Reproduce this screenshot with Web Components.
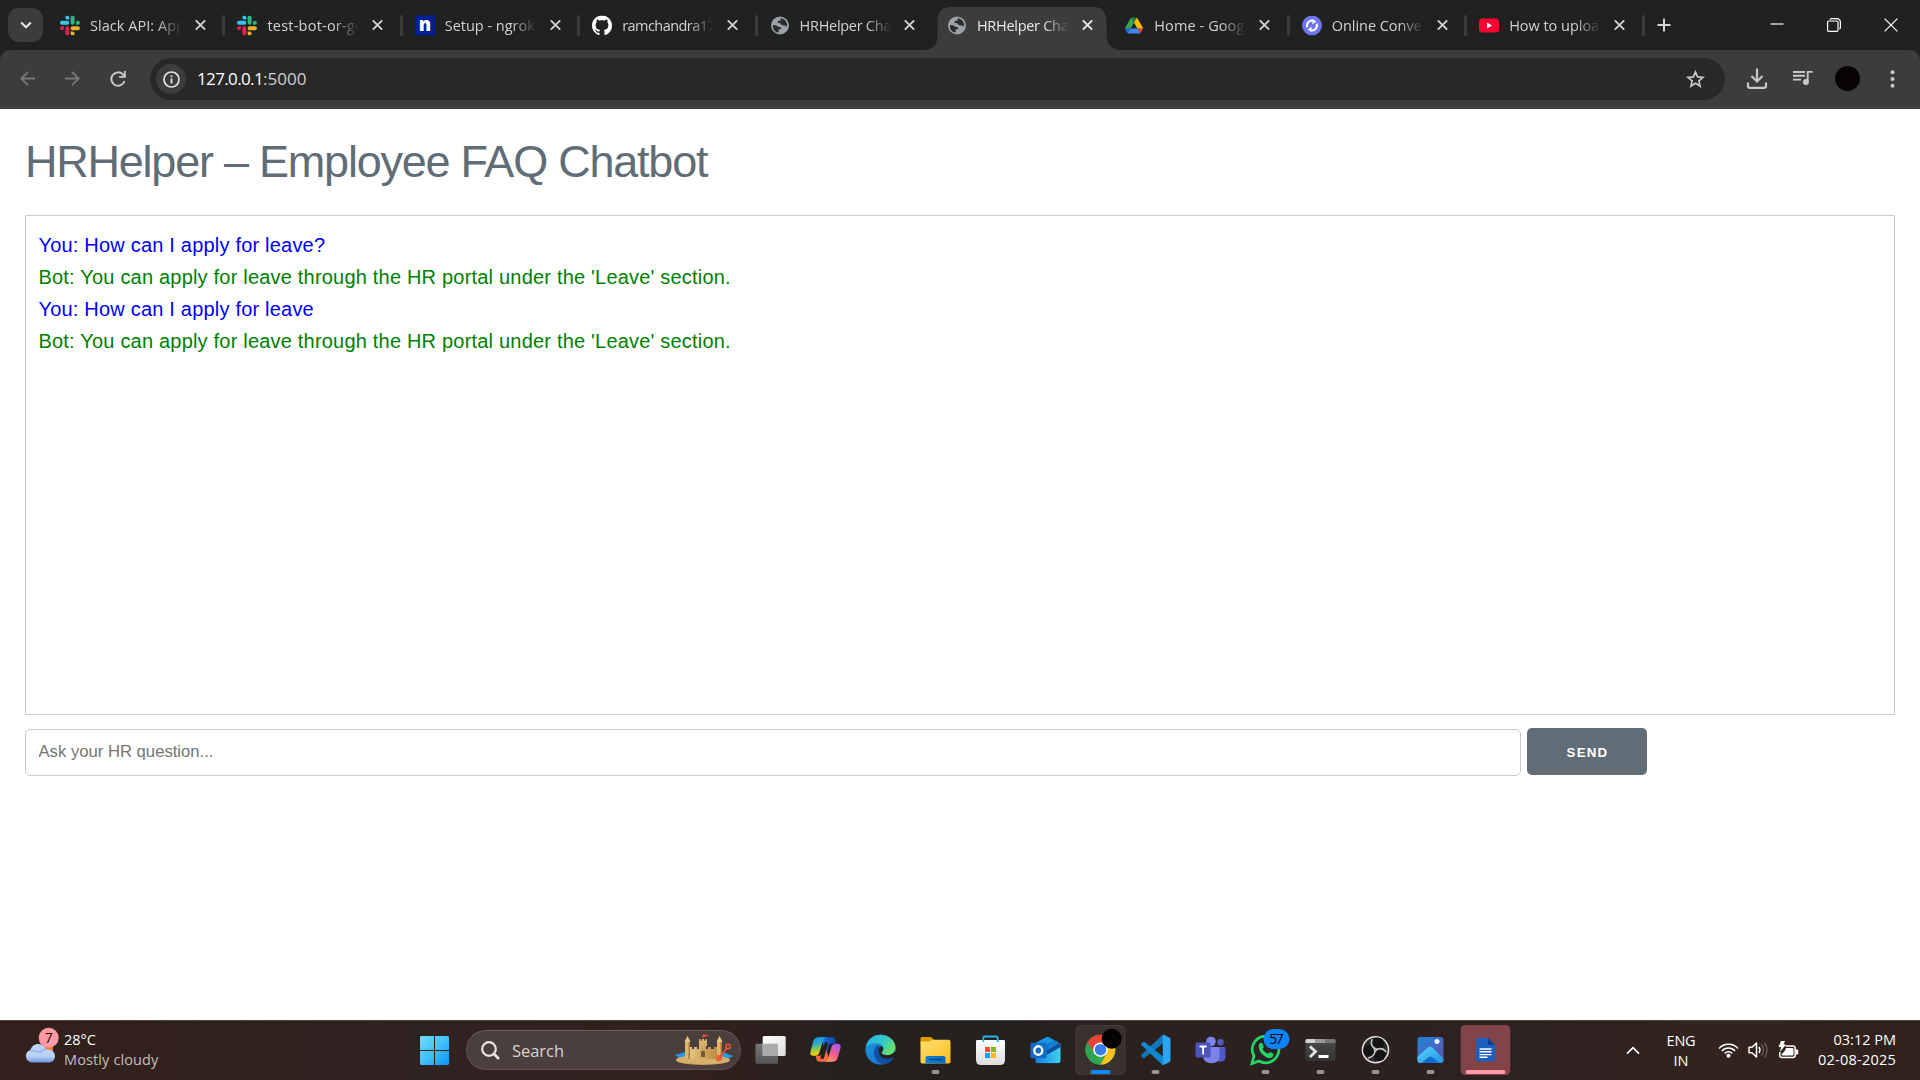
<!DOCTYPE html>
<html lang="en">
<head>
<meta charset="utf-8">
<title>HRHelper Chatbot</title>
<style>
html,body{margin:0;height:100%;overflow:hidden;background:#fff}
</style>
</head>
<body>
<desktop-screen></desktop-screen>
<script>
const define = (name, html, init) => customElements.define(name, class extends HTMLElement {
  constructor(){ super(); this.attachShadow({mode:'open'}); }
  connectedCallback(){
    this.shadowRoot.innerHTML = typeof html === 'function' ? html(this) : html;
    if (init) init(this);
  }
});

/* Single line of text whose tracking is adjusted to a given width (attribute w). */
define('fit-text', `<style>:host{display:block;white-space:nowrap}span{display:inline-block}</style><span><slot></slot></span>`, el => {
  const w = +el.getAttribute('w'), n = el.textContent.length;
  if (!w) return;
  const s = el.shadowRoot.querySelector('span');
  s.style.letterSpacing = ((w - s.getBoundingClientRect().width) / n).toFixed(3) + 'px';
});

const globe = `<svg width="20" height="20" viewBox="0 0 20 20"><circle cx="10" cy="10" r="9" fill="#9aa0a6"/><path d="M3 9.500Q6.500 9.300 8 11q1.200 1 3.200.8l-.3 1.800-2 .2-.4 3.200C4.800 16.500 2.500 13.500 3 9.500zM10.800 2.800l-.3 2.100-2.600.5-.2 2.200 2.700.2 1 1.700 3.300.4 2.400 1.100c.6-4-2.300-7.800-6.300-8.200z" fill="#2b2d2d"/></svg>`;
const slack = `<svg width="20" height="20" viewBox="0 0 54 54"><path fill="#36c5f0" d="M19.712.133a5.381 5.381 0 0 0-5.376 5.387 5.381 5.381 0 0 0 5.376 5.386h5.376V5.52A5.381 5.381 0 0 0 19.712.133m0 14.365H5.376A5.381 5.381 0 0 0 0 19.884a5.381 5.381 0 0 0 5.376 5.387h14.336a5.381 5.381 0 0 0 5.376-5.387 5.381 5.381 0 0 0-5.376-5.386"/><path fill="#2eb67d" d="M53.76 19.884a5.381 5.381 0 0 0-5.376-5.386 5.381 5.381 0 0 0-5.376 5.386v5.387h5.376a5.381 5.381 0 0 0 5.376-5.387m-14.336 0V5.52A5.381 5.381 0 0 0 34.048.133a5.381 5.381 0 0 0-5.376 5.387v14.364a5.381 5.381 0 0 0 5.376 5.387 5.381 5.381 0 0 0 5.376-5.387"/><path fill="#ecb22e" d="M34.048 54a5.381 5.381 0 0 0 5.376-5.387 5.381 5.381 0 0 0-5.376-5.386h-5.376v5.386A5.381 5.381 0 0 0 34.048 54m0-14.365h14.336a5.381 5.381 0 0 0 5.376-5.386 5.381 5.381 0 0 0-5.376-5.387H34.048a5.381 5.381 0 0 0-5.376 5.387 5.381 5.381 0 0 0 5.376 5.386"/><path fill="#e01e5a" d="M0 34.249a5.381 5.381 0 0 0 5.376 5.386 5.381 5.381 0 0 0 5.376-5.386v-5.387H5.376A5.381 5.381 0 0 0 0 34.25m14.336-.001v14.364A5.381 5.381 0 0 0 19.712 54a5.381 5.381 0 0 0 5.376-5.387V34.25a5.381 5.381 0 0 0-5.376-5.387 5.381 5.381 0 0 0-5.376 5.387"/></svg>`;
const favicons = {
  slack, globe,
  ngrok: `<svg width="20" height="20" viewBox="0 0 20 20" style="overflow:visible"><path fill="#011f97" d="M0 0h20v20H0z"/><text x="10" y="15.200" text-anchor="middle" font-family="Open Sans" font-weight="800" font-size="18.500" fill="#fff">n</text></svg>`,
  github: `<svg width="20" height="20" viewBox="0 0 16 16"><path fill="#fff" d="M8 0C3.58 0 0 3.58 0 8c0 3.54 2.29 6.53 5.47 7.59.4.07.55-.17.55-.38 0-.19-.01-.82-.01-1.49-2.01.37-2.53-.49-2.69-.94-.09-.23-.48-.94-.82-1.13-.28-.15-.68-.52-.01-.53.63-.01 1.08.58 1.23.82.72 1.21 1.87.87 2.33.66.07-.52.28-.87.51-1.07-1.78-.2-3.64-.89-3.64-3.95 0-.87.31-1.59.82-2.15-.08-.2-.36-1.02.08-2.12 0 0 .67-.21 2.2.82.64-.18 1.32-.27 2-.27s1.36.09 2 .27c1.53-1.04 2.2-.82 2.2-.82.44 1.1.16 1.92.08 2.12.51.56.82 1.27.82 2.15 0 3.07-1.87 3.75-3.65 3.95.29.25.54.73.54 1.48 0 1.07-.01 1.93-.01 2.2 0 .21.15.46.55.38A8.01 8.01 0 0 0 16 8c0-4.42-3.58-8-8-8z"/></svg>`,
  drive: `<svg width="20" height="20" viewBox="-5 -9.500 97 97"><path fill="#1a73e8" d="m6.600 66.850 3.850 6.650c.8 1.400 1.950 2.500 3.300 3.300l13.750-23.800h-27.500c0 1.550.4 3.100 1.200 4.500z"/><path fill="#34a853" d="m43.650 25-13.750-23.800c-1.350.8-2.500 1.900-3.300 3.300l-25.400 44a9.060 9.060 0 0 0-1.200 4.500h27.500z"/><path fill="#ea4335" d="m73.550 76.800c1.350-.8 2.500-1.900 3.300-3.300l1.600-2.750 7.650-13.250c.8-1.400 1.200-2.950 1.200-4.500h-27.500l5.850 11.500z"/><path fill="#188038" d="m43.650 25 13.750-23.800c-1.350-.8-2.900-1.200-4.500-1.200h-18.500c-1.600 0-3.150.45-4.500 1.200z"/><path fill="#4285f4" d="m59.800 53h-32.300l-13.750 23.800c1.350.8 2.900 1.200 4.500 1.200h50.800c1.600 0 3.150-.45 4.500-1.200z"/><path fill="#fbbc04" d="m73.400 26.500-12.700-22c-.8-1.400-1.950-2.500-3.300-3.300l-13.750 23.800 16.150 28h27.450c0-1.550-.4-3.100-1.200-4.500z"/></svg>`,
  convert: `<svg width="20" height="20" viewBox="0 0 20 20"><circle cx="10" cy="10" r="10" fill="#6f74f3"/><g fill="none" stroke="#fff" stroke-width="2"><path d="M5.300 11.800A5 5 0 0 1 11.500 5.300"/><path d="M14.700 8.200A5 5 0 0 1 8.500 14.700"/></g><path fill="#fff" d="M10.300 3.400 14.300 6l-3.800 2.700zM9.700 16.600 5.700 14l3.800-2.700z"/></svg>`,
  youtube: `<svg width="20" height="20" viewBox="0 0 20 20"><rect y="3" width="20" height="14" rx="3.500" fill="#ff0033"/><path fill="#fff" d="m8 7 5 3-5 3z"/></svg>`
};

define('browser-tab', el => `<style>
:host{display:flex;position:relative;width:177.400px;height:43px;margin-top:7px;align-items:center;box-sizing:border-box;padding-left:12px;color:#d0d2d1;font:14.500px/20px "Open Sans",sans-serif;flex:none}
.ico{display:flex;width:20px}
.t{width:90px;margin-left:10px;overflow:hidden;-webkit-mask:linear-gradient(90deg,#000 66px,transparent 92px);mask:linear-gradient(90deg,#000 66px,transparent 92px);padding-top:1px}
.x{margin-left:14.800px;display:block}
.sep{position:absolute;right:0;top:10.500px;width:3px;height:21px;background:#3b3d3c;border-radius:2px}
:host([nosep]) .sep{display:none}
:host>*{translate:0 -3.500px}
.ico,.t,.x,.sep{translate:0 -3.500px}
.sep{translate:0 -3px}
.bg{position:absolute;left:-10px;top:0;translate:0 0;display:none}
:host([active]){color:#e9e9e9}
:host([active]) .bg{display:block}
:host([active]) .ico,:host([active]) .t,:host([active]) .x{position:relative}
</style>
<svg class="bg" width="196" height="43" viewBox="0 0 196 43"><path fill="#3c3c3c" d="M0 43c7 0 12.500-6 12.500-13V13c0-7 5-13 12.500-13h144c7.500 0 12.500 6 12.500 13v17c0 7 6 13 14.500 13z"/></svg>
<span class="ico">${favicons[el.getAttribute('icon')]}</span>
<div class="t"><fit-text w="${el.getAttribute('w')}">${el.getAttribute('label')}</fit-text></div>
<svg class="x" width="11" height="11" viewBox="0 0 11 11"><path d="m.8.8 9.400 9.400M10.200.8.800 10.200" stroke="currentColor" stroke-width="1.900"/></svg>
<i class="sep"></i>`);

define('tab-strip', `<style>
:host{display:flex;height:50px;background:#202221;align-items:flex-start;overflow:hidden}
.search{display:flex;width:35px;height:34px;margin:8px 5px 0 8px;border-radius:11px;background:#3c3c3c;align-items:center;justify-content:center;flex:none}
.new{margin:18px 0 0 12.500px}
.win{margin:0 22px 0 auto;height:49px;display:flex;align-items:center;gap:43px}
.win svg{display:block}
</style>
<div class="search"><svg width="12" height="8" viewBox="0 0 12 8"><path d="m1.200 1.500 4.800 4.800 4.800-4.800" fill="none" stroke="#e3e3e3" stroke-width="2.200"/></svg></div>
<browser-tab icon="slack" label="Slack API: App" w="95"></browser-tab>
<browser-tab icon="slack" label="test-bot-or-ge" w="96"></browser-tab>
<browser-tab icon="ngrok" label="Setup - ngrok" w="90"></browser-tab>
<browser-tab icon="github" label="ramchandra17" w="93"></browser-tab>
<browser-tab icon="globe" label="HRHelper Cha" w="91.500" nosep></browser-tab>
<browser-tab icon="globe" label="HRHelper Cha" w="91.500" nosep active></browser-tab>
<browser-tab icon="drive" label="Home - Goog" w="90"></browser-tab>
<browser-tab icon="convert" label="Online Conve" w="90"></browser-tab>
<browser-tab icon="youtube" label="How to uploa" w="90"></browser-tab>
<svg class="new" width="14" height="14" viewBox="0 0 14 14"><path d="M7 .5v13M.5 7h13" stroke="#d4d4d4" stroke-width="2"/></svg>
<div class="win">
<svg width="14" height="14" viewBox="0 0 14 14"><path d="M.5 6h13" stroke="#fff" stroke-width="1.200"/></svg>
<svg width="14" height="14" viewBox="0 0 14 14"><rect x=".6" y="3" width="10.400" height="10.400" rx="1.200" fill="none" stroke="#fff" stroke-width="1.200"/><path d="M3 1.600Q3.400.6 4.500.6h5.500a3.400 3.400 0 0 1 3.400 3.400v5.500q0 1-1 1.600" fill="none" stroke="#fff" stroke-width="1.200"/></svg>
<svg width="14" height="14" viewBox="0 0 14 14"><path d="m.6.6 12.800 12.800M13.400.6.600 13.400" stroke="#fff" stroke-width="1.200"/></svg>
</div>`);

define('tool-bar', `<style>
:host{display:flex;height:59px;background:#202221;font:17px/24px "Open Sans",sans-serif}
.bar{flex:1;display:flex;align-items:center;background:#3c3c3c;border-radius:10px 10px 0 0;padding-bottom:1px;box-shadow:inset 0 -1px #3c3c3c,inset 0 -2px #4b4747;box-sizing:border-box}
svg{display:block;flex:none}
.nav{display:flex;margin-left:20px;gap:29.500px;width:130px;align-items:center}
.nav svg{margin-top:-1px}
.omni{display:flex;align-items:center;width:1575px;height:42px;border-radius:21px;background:#282828;box-sizing:border-box;padding:0 20px 0 6px;color:#d0d0d0}
.info{width:30px;height:30px;border-radius:50%;background:#3c3c3c;display:flex;align-items:center;justify-content:center;margin-right:11px}
.url{display:flex}
b{font-weight:400;color:#fff}
.star{margin-left:auto}
.av{width:25px;height:25px;border-radius:50%;background:#070305;margin:-1px 0 0 22px;flex:none}
</style>
<div class="bar">
<div class="nav">
<svg width="15" height="15" viewBox="0 0 15 15"><path d="M15 7.500H1.500M8 .8 1.300 7.500 8 14.200" stroke="#777" stroke-width="1.800" fill="none"/></svg>
<svg width="15" height="15" viewBox="0 0 15 15"><path d="M0 7.500h13.500M7 .8l6.700 6.700L7 14.200" stroke="#777" stroke-width="1.800" fill="none"/></svg>
<svg width="16" height="16" viewBox="0 0 16 16" style="margin-left:.5px"><path d="M14.500 10A6.700 6.700 0 1 1 12.800 3.300L14.700 5.300" fill="none" stroke="#c7c7c7" stroke-width="2"/><path d="M15.800 0v6.800H9V5h5V0z" fill="#c7c7c7"/></svg>
</div>
<div class="omni">
<span class="info"><svg width="17" height="17" viewBox="0 0 17 17"><circle cx="8.500" cy="8.500" r="7.500" fill="none" stroke="#e3e3e3" stroke-width="1.700"/><path d="M7.600 7.500h1.800v5H7.600zM7.600 4.400h1.800v1.800H7.600z" fill="#e3e3e3"/></svg></span>
<span class="url"><fit-text w="66"><b>127.0.0.1</b></fit-text><fit-text w="43.500">:5000</fit-text></span>
<svg class="star" width="19" height="18" viewBox="0 0 19 18"><path d="m9.500 2 2.100 4.900 5.300.5-4 3.500 1.200 5.200-4.600-2.800-4.600 2.800 1.200-5.200-4-3.500 5.300-.5z" fill="none" stroke="#c7c7c7" stroke-width="1.700"/></svg>
</div>
<svg width="22" height="22" viewBox="0 0 22 22" style="margin-left:21px"><path d="M11 .5v12M5.500 8l5.500 5.500L16.500 8M2 14.500v3.600q0 1.700 1.700 1.700h14.600q1.700 0 1.700-1.700v-3.600" fill="none" stroke="#c7c7c7" stroke-width="2.200"/></svg>
<svg width="20" height="16" viewBox="0 0 20 16" style="margin:-2px 0 0 25px"><path d="M0 2h12M0 5.800h12M0 9.600h8M14.700 11V1.900h5" fill="none" stroke="#c7c7c7" stroke-width="1.900"/><circle cx="12.900" cy="12" r="3" fill="#c7c7c7"/></svg>
<span class="av"></span>
<svg width="5" height="18" viewBox="0 0 5 18" style="margin-left:29.500px"><g fill="#c7c7c7"><circle cx="2.500" cy="2.200" r="2"/><circle cx="2.500" cy="9" r="2"/><circle cx="2.500" cy="15.800" r="2"/></g></svg>
</div>`);

define('chat-line', `<style>:host{display:block;color:blue}:host([from=bot]){color:green}</style><slot></slot>`);

define('hr-chatbot', `<style>
:host{display:block;flex:1;padding:25px 25px 0;background:#fff;color:#606c76;font:300 20px/32px "Liberation Sans",Arial,sans-serif;letter-spacing:.2px}
h2{font-size:45px;line-height:56px;font-weight:300;letter-spacing:-1.230px;margin:0 0 25px}
.box{height:500px;box-sizing:border-box;border:1px solid #ccc;padding:12.500px}
.row{display:flex;margin-top:13px;align-items:flex-start;gap:6px}
input{width:1496px;height:47px;margin:1px 0 0;box-sizing:border-box;border:1px solid #ccc;border-radius:5px;padding:0 12.500px 2px;font:16.670px "Liberation Sans",Arial,sans-serif;background:#fff;outline:0}
input::placeholder{color:#757575}
button{width:120px;height:47px;border:0;border-radius:5px;background:#606c76;color:#fff;font:700 13.300px/47px "Liberation Sans",Arial,sans-serif;letter-spacing:1.250px;padding:1px 0 0 1px;text-transform:uppercase}
</style>
<h2>HRHelper – Employee FAQ Chatbot</h2>
<div class="box">
<chat-line>You: How can I apply for leave?</chat-line>
<chat-line from="bot">Bot: You can apply for leave through the HR portal under the 'Leave' section.</chat-line>
<chat-line>You: How can I apply for leave</chat-line>
<chat-line from="bot">Bot: You can apply for leave through the HR portal under the 'Leave' section.</chat-line>
</div>
<div class="row"><input placeholder="Ask your HR question..."><button>SEND</button></div>`);

/* Taskbar glyphs, each drawn in a 55x60 cell centred on (27.5, 29.7). */
const apps = {
view:`<defs><linearGradient id="a" x2="1" y2="1"><stop stop-color="#fff"/><stop offset="1" stop-color="#ddd"/></linearGradient><linearGradient id="b" x2="0" y2="1"><stop stop-color="#777"/><stop offset="1" stop-color="#555"/></linearGradient></defs><rect x="12.500" y="23.700" width="22.500" height="20" rx="1.500" fill="url(#b)"/><rect x="19.700" y="16" width="23" height="20" rx="1.500" fill="url(#a)"/><path d="M19.700 23.700H35V36H21q-1.300 0-1.300-1.300z" fill="#aaa"/>`,
copilot:`<defs><linearGradient id="a" x2=".2" y2="1"><stop stop-color="#1b9be8"/><stop offset=".35" stop-color="#20a6d8"/><stop offset=".65" stop-color="#7cc65a"/><stop offset="1" stop-color="#ffd200"/></linearGradient><linearGradient id="b" x1=".8" x2=".2" y2="1"><stop stop-color="#a855f0"/><stop offset=".5" stop-color="#ef5a9a"/><stop offset="1" stop-color="#ff9a4a"/></linearGradient><linearGradient id="c" x2="1"><stop stop-color="#1580e0"/><stop offset="1" stop-color="#1442b5"/></linearGradient></defs><path d="M21 17.300h13q2.700 0 3.300 3l.7 3.200h-4q-2.500 0-3.500 3L28 34 24 20z" fill="url(#c)"/><path d="M34 41.700H21.500q-2.700 0-3.200-3l-.8-3H21q2.500 0 3.500-3L27 25l4 14z" fill="#f26a45"/><path d="M21 17.300h8q-3 0-4.200 4l-3.500 11.500q-1 2.900-4 2.900h-2q-3.800 0-2.800-4.200l2.700-10q1.200-4.200 5.800-4.200z" fill="url(#a)"/><path d="M34 41.700h-7.800q3-.2 4-3.700l3.500-11.400q1-2.900 4-2.900h2q3.800 0 2.800 4.200l-2.700 9.600q-1.200 4.200-5.800 4.200z" fill="url(#b)"/><path d="m28.300 23.700-4 13.500" stroke="#25211f" stroke-width="3.500" stroke-linecap="round"/>`,
edge:`<defs><linearGradient id="a" y2=".5"><stop stop-color="#27aee8"/><stop offset=".6" stop-color="#34c8c8"/><stop offset="1" stop-color="#67e06c"/></linearGradient><linearGradient id="b" x2=".5" y2="1"><stop stop-color="#1d9bdd"/><stop offset="1" stop-color="#1976d2"/></linearGradient></defs><circle cx="27.500" cy="29.700" r="15" fill="url(#b)"/><path d="M13 26.500C15 18.500 21 14.700 27.500 14.700c8.500 0 15 6.300 15 12.500 0 5.500-4 8-8 8-3.400 0-5.800-1-5.800-2.200s1.700-1.500 1.700-4.500c0-3-3-5.200-7-5.200-4.400 0-8.200 1.500-10.400 3.200z" fill="url(#a)"/><path d="M23.500 25.700c-4.500 4.500-3 18.400 8.500 18.500 4.500-1 7.500-4 9-6.800.4-.8-.5-1-1.200-.6-7.300 3.200-14.300-.8-14.100-6.300.1-2 .8-3.400 1.500-4.300-1-.9-2.600-1.500-3.700-.5z" fill="#1250a0"/><path d="M25.700 31.500q-.4-4.500 3-5.200 1.800 1.200 1.600 3c-.2 2-1.600 2.400-1.600 3.700 0 1.200 2.400 2.200 5.800 2.200 2.600 0 5.500-1.300 7-4l1.500 2.500-1.600 4q-.5-.6-1.600-.2c-7 3.200-14.300-.5-14.100-6z" fill="#25211f"/>`,
files:`<defs><linearGradient id="a" x2="1" y2="1"><stop stop-color="#ffdf70"/><stop offset="1" stop-color="#ffbd20"/></linearGradient><linearGradient id="b" y2="0" x2="1"><stop stop-color="#1082d0"/><stop offset="1" stop-color="#0669bd"/></linearGradient></defs><path d="M12.500 18.500q0-1.500 1.500-1.500h8q1.200 0 2 .8l2.200 2.200-3 3H12.500z" fill="#e09b00"/><path d="M12.500 21.500h9l3.500-1.800h15.500q2 0 2 2v20q0 1.800-1.800 1.800H14.200q-1.700 0-1.700-1.700z" fill="url(#a)"/><path d="M17.500 43.500v-5.300q0-2.200 2.200-2.200h15.600q2.200 0 2.200 2.200v5.300z" fill="url(#b)"/><path d="M21 39.500h13" stroke="#05447f" stroke-width="1.200"/>`,
store:`<defs><linearGradient id="a" x2="0" y2="1"><stop stop-color="#fff"/><stop offset="1" stop-color="#dcdcdc"/></linearGradient></defs><path d="M20.300 22v-4q0-1.500 1.500-1.500h11.400q1.500 0 1.500 1.500v4" fill="none" stroke="#29b5e8" stroke-width="1.800"/><path d="M14.200 20h26.600q1.200 0 1.200 1.200V40q0 5-5 5H18q-5 0-5-5V21.200q0-1.200 1.200-1.200z" fill="url(#a)"/><path d="M20.300 20v2M34.700 20v2" stroke="#29b5e8" stroke-width="1.800"/><path d="M22 27h5v5h-5z" fill="#f25022"/><path d="M28 27h5v5h-5z" fill="#7fba00"/><path d="M22 33h5v5h-5z" fill="#00a4ef"/><path d="M28 33h5v5h-5z" fill="#ffb900"/>`,
outlook:`<defs><linearGradient id="a" x2="1"><stop stop-color="#1480d8"/><stop offset="1" stop-color="#3fd1f5"/></linearGradient></defs><path d="m17.500 25 12-8.200 12.500 8v17q0 1.500-1.500 1.500H20q-2.500 0-2.500-2.500z" fill="#1066b8"/><path d="M18 22.500 28.500 17q1-.6 2 0L37 20.500 24 28l-6-1z" fill="#1995df"/><path d="M28 27 37.500 20.500q4.500 2.500 5 4.500L30 32z" fill="#1a7fd4"/><path d="m28 32 14.500-8v17q0 2-2 2H20q-2.500 0-2.500-2.500V34z" fill="url(#a)"/><path d="M28.500 30.500 42.500 22.500v4.500l-14 8z" fill="#0b4d9b"/><rect x="12.500" y="22.700" width="16" height="15.600" rx="1.500" fill="#0f6cc7"/><ellipse cx="20.300" cy="30.500" rx="4" ry="4.300" fill="none" stroke="#fff" stroke-width="2.400"/>`,
chrome:`<circle cx="27.500" cy="29.700" r="15" fill="#34a853"/><path d="M14.500 22.200A15 15 0 0 1 40.500 22.200L27.500 22.800 21.500 33.200z" fill="#ea4335"/><path d="M27.500 22.700h13a15 15 0 0 1-13 22l6.200-11.500z" fill="#fbc21b"/><path d="M14.500 22.200 21.400 33.200 27.500 44.700a15 15 0 0 1-13-22.500z" fill="#2da44e"/><circle cx="27.500" cy="29.700" r="7.200" fill="#fff"/><circle cx="27.500" cy="29.700" r="5.800" fill="#3c7ee8"/><circle cx="38.700" cy="18.700" r="10" fill="#050203"/>`,
code:`<path d="m34.500 15-21 19.500q-1 1 0 2l1.500 1.300q.8.6 1.700 0L40 19.500V17z" fill="#1177bd"/><path d="M34.500 45 13.500 25.300q-1-1 0-2l1.500-1.300q.8-.6 1.700 0L40 40.500V43z" fill="#1386cf"/><path d="M34.200 15q.6-.6 1.500-.2l5.500 2.600q1.300.6 1.300 2v20.800q0 1.400-1.300 2l-5.500 2.600q-1 .3-1.700-.4.8.3.8-1V16q0-1-.6-1z" fill="#2aa5f2"/>`,
teams:`<circle cx="28" cy="21.500" r="4.800" fill="#7b83eb"/><circle cx="37.500" cy="22.300" r="3.200" fill="#5059c9"/><path d="M31 27h10.500q1 0 1 1v8.500q0 5-5 5.300-4 0-6.500-3z" fill="#5059c9"/><path d="M20 27h15.500q1 0 1 1v9q-.5 6-8 6.200-7.500-.2-8.500-6.200z" fill="#7b83eb"/><rect x="12.500" y="22.500" width="15" height="15" rx="1.300" fill="#4b53bc"/><path d="M16.500 26.500h7.200M20.100 26.500v8" stroke="#fff" stroke-width="1.900"/>`,
whatsapp:`<path d="m14 43.500 2-7.500a13.300 13.300 0 1 1 5 5z" fill="#2c2221" stroke="#25d366" stroke-width="2.800"/><path d="M21.500 23.800c.8-1.300 2.500-1.300 3 0l1.200 2.600c.4 1.300-1.300 2-.9 2.900 1 2 2.700 3.400 4.700 4.300.9.4 1.500-1.700 2.800-1.300l2.700 1.300c1.300.8.3 3.200-1.200 4-2.200 1.200-5.500-.1-8.100-2.200-3.600-2.900-6.400-8-4.200-11.600z" fill="#25d366"/><rect x="25.500" y="9" width="26" height="20" rx="10" fill="#0a84f5"/><text x="38.500" y="24.200" text-anchor="middle" font-family="Open Sans" font-size="13.800" textLength="14.500" fill="#000">57</text>`,
terminal:`<defs><linearGradient id="a" x2="0" y2="1"><stop stop-color="#4c4c4c"/><stop offset="1" stop-color="#333"/></linearGradient></defs><rect x="12.500" y="19" width="30" height="22" rx="1.500" fill="url(#a)"/><path d="M12.500 23v-2.500q0-1.500 1.500-1.500h8.500v4z" fill="#d0d0d0"/><path d="M22.500 19h10v4h-10z" fill="#9a9a9a"/><path d="M32.500 19H41q1.500 0 1.500 1.500V23h-10z" fill="#777"/><path d="m17 26.500 5.500 5-5.500 5.500" fill="none" stroke="#e8e8e8" stroke-width="2.800"/><path d="M25.500 36.500h10" stroke="#fff" stroke-width="3"/>`,
obs:`<circle cx="27.500" cy="29.700" r="13" fill="#2a2829" stroke="#e0dddd" stroke-width="1.600"/><g fill="none" stroke="#c9c6c6" stroke-width="1.600" stroke-linecap="round"><g fill="#141314" stroke="none"><circle cx="30" cy="23.500" r="6"/><circle cx="31.500" cy="35" r="6"/><circle cx="21.200" cy="31" r="6"/></g><path d="M23.800 19.800C22.300 24.500 24.500 28.500 29 29.200"/><path d="M23.800 19.800C22.300 24.500 24.500 28.500 29 29.200" transform="rotate(120 27.500 29.700)"/><path d="M23.800 19.800C22.300 24.500 24.500 28.500 29 29.200" transform="rotate(240 27.500 29.700)"/></g>`,
photos:`<defs><linearGradient id="a" x2="1" y2="1"><stop stop-color="#1c86dc"/><stop offset="1" stop-color="#6a4ba8"/></linearGradient><linearGradient id="b" x2="1" y2="1"><stop stop-color="#60dcfa"/><stop offset="1" stop-color="#1583df"/></linearGradient><clipPath id="c"><rect x="14.500" y="17" width="26" height="26" rx="3"/></clipPath></defs><g clip-path="url(#c)"><path d="M14 17h27v27H14z" fill="url(#a)"/><path d="m10 41 14.800-13.500q2.200-2 4.400 0L45 43v4H10z" fill="url(#b)"/><path d="m15 46 11-9q1.500-1 3 0l11 9z" fill="#0d6bd2"/></g><circle cx="34" cy="21.500" r="2.500" fill="#f5f0fa"/>`,
docs:`<path d="M18 19.500q0-1.500 1.500-1.500H30l7 7v14.700q0 1.500-1.500 1.500h-16q-1.500 0-1.500-1.500z" fill="#1b5fc0"/><path d="m30 18 7 7h-7z" fill="#0c408f"/><path d="M21.500 29h12M21.500 31.800h12M21.500 34.600h12M21.500 37.300h8" stroke="#fff" stroke-width="1.400"/>`
};
define('task-app', el => {
  const n = el.getAttribute('app'), r = el.getAttribute('run');
  return `<style>:host{display:block;width:55px;height:60px;flex:none}svg{display:block}</style>
<svg width="55" height="60" viewBox="0 0 55 60">
${r==='active' ? '<rect x="3" y="5.500" width="49" height="49" rx="4.500" fill="#3a302e" stroke="#463b39"/>' : ''}
${r==='alert' ? '<rect x="2.700" y="5" width="49.600" height="50" rx="4.500" fill="#824349"/>' : ''}
${apps[n]}
${r==='bg' ? '<rect x="23.500" y="50" width="8" height="4" rx="2" fill="#9a9493"/>' : ''}
${r==='active' ? '<rect x="17.500" y="50" width="20" height="4" rx="2" fill="#0a8cff"/>' : ''}
${r==='alert' ? '<rect x="7.500" y="50" width="40" height="4" rx="2" fill="#ff99a4"/>' : ''}
</svg>`;});

define('task-bar', `<style>
:host{display:flex;height:60px;box-sizing:border-box;background:linear-gradient(90deg,#33201a 0,#31211e 12%,#2f2322 22%,#31201d 37%,#25211f 44%,#25211f 53%,#2c211f 60%,#2e2221 80%,#33231d 92%,#30201e);box-shadow:inset 0 1px #494342;color:#fff;font:14.500px/20px "Open Sans",sans-serif}
svg{display:block;flex:none}
.weather{display:flex;width:420px;align-items:center}
.weather>svg{margin-left:23px}
.txt{margin-left:3px}
.dim{color:#c5bfbd}
.start{margin:16px 17px 0 0}
.search{display:flex;width:275px;height:40px;margin-top:10px;border-radius:20px;background:#4b3f3d;box-sizing:border-box;border:1px solid #5b504e;border-top-color:#6b605e;align-items:center;color:#d8d3d1;font-size:16.500px;margin-right:2px}
.search .l{margin:0 12px 0 14px}
.search fit-text{padding-top:1px}
.castle{margin:0 6px 0 auto}
.tray{display:flex;align-items:center;margin-left:auto;margin-right:24px}
.tray fit-text{text-align:center}
.clock{display:flex;flex-direction:column;align-items:flex-end;margin-left:19px}
</style>
<div class="weather">
<svg width="38" height="60" viewBox="0 0 38 60"><defs><linearGradient id="k" x2="0" y2="1"><stop stop-color="#b9d3fb"/><stop offset=".65" stop-color="#bcd3f8"/><stop offset="1" stop-color="#6f94dc"/></linearGradient></defs><path d="M20 22h10v10H20z" fill="#f47a18"/><path d="M8.500 42.500a6.500 6.500 0 0 1-1-12.600C8.500 26.300 11.500 24 15 24c3.700 0 6.500 2 8 5.300 5 0 9 2.200 9 7 0 3.700-2.800 6.200-6 6.200z" fill="url(#k)"/><path d="M8 31q5-1 9 1.500 2-3 6-3.200" fill="none" stroke="#7ba0e4" stroke-width="1.500" opacity=".6"/><circle cx="25.700" cy="17.700" r="10" fill="#ff99a4"/><text x="25.700" y="22.800" text-anchor="middle" font-family="Open Sans" font-size="14" fill="#1a0a0a">7</text></svg>
<div class="txt"><fit-text w="32">28°C</fit-text><fit-text class="dim" w="94.500">Mostly cloudy</fit-text></div>
</div>
<svg class="start" width="29" height="29" viewBox="0 0 29 29"><defs><linearGradient id="w" gradientUnits="userSpaceOnUse" x1="0" y1="0" x2="29" y2="29"><stop stop-color="#76dcff"/><stop offset=".5" stop-color="#42c0fb"/><stop offset="1" stop-color="#0a94f5"/></linearGradient></defs><path fill="url(#w)" d="M1 0h13v14H0V1zM15 0h13l1 1v13H15zM0 15h14v14H1l-1-1zM15 15h14v13l-1 1H15z"/></svg>
<div class="search">
<svg class="l" width="19" height="19" viewBox="0 0 19 19"><circle cx="8" cy="8" r="6.800" fill="none" stroke="#e8e4e3" stroke-width="2.200"/><path d="m13 13 5 5" stroke="#e8e4e3" stroke-width="2.600"/></svg>
<fit-text w="52">Search</fit-text>
<svg class="castle" width="60" height="32" viewBox="0 0 60 32"><defs><linearGradient id="s" x2="1"><stop stop-color="#e5c583"/><stop offset="1" stop-color="#bd8a42"/></linearGradient></defs><path d="m1 21 10-3h38l10 4-7 4H8z" fill="#249be0"/><ellipse cx="29" cy="26" rx="27" ry="5" fill="#d6b06c"/><path d="M9 28.500q20 4 40 0-20 4.500-40 0" fill="#8c6433"/><path d="M15 13h3v2h2v-2h3v2h2V8h2v2h2V8h3v7h2v-2h3v2h3v-2h3v12H15z" fill="url(#s)"/><path d="M25 5h1.500v1.500H28V5h2v1.500h1.500V5H33v7h-8z" fill="#d8b26b"/><path d="M11 8h5v17h-5zM43 8h5v17h-5z" fill="#dcb76e"/><path d="M14.500 8H16v17h-1.500zM46.500 8H48v17h-1.500z" fill="#aa7b3d"/><path d="m10.500 8 3-6 3 6zM42.500 8l3-6 3 6z" fill="#edc982"/><path d="M27 23v-4.500a2 2 0 0 1 4 0V23z" fill="#77563b"/><path d="M28.500 5V.5" stroke="#735137"/><path d="m29 0 6 1.500-6 2z" fill="#ee462c"/><path d="m46 23 7-9" stroke="#e44b2e" stroke-width="1.800"/><circle cx="54" cy="12.500" r="2.200" fill="none" stroke="#f05b35" stroke-width="1.500"/><path d="m44 20 5 4-3 3q-4 .5-4-1z" fill="#f05b35"/></svg>
</div>
<task-app app="view"></task-app><task-app app="copilot"></task-app><task-app app="edge"></task-app><task-app app="files" run="bg"></task-app><task-app app="store"></task-app><task-app app="outlook"></task-app><task-app app="chrome" run="active"></task-app><task-app app="code" run="bg"></task-app><task-app app="teams"></task-app><task-app app="whatsapp" run="bg"></task-app><task-app app="terminal" run="bg"></task-app><task-app app="obs" run="bg"></task-app><task-app app="photos" run="bg"></task-app><task-app app="docs" run="alert"></task-app>
<div class="tray">
<svg width="14" height="9" viewBox="0 0 14 9" style="margin-right:26px"><path d="m1 7.700 6-6 6 6" fill="none" stroke="#fff" stroke-width="1.800"/></svg>
<div style="width:30px;padding-top:2px"><fit-text w="29">ENG</fit-text><fit-text w="15">IN</fit-text></div>
<svg width="21" height="16" viewBox="0 0 21 16" style="margin-left:22px"><g fill="none" stroke="#fff" stroke-width="1.500"><path d="M1 6.500a13 13 0 0 1 19 0"/><path d="M3.900 9a9 9 0 0 1 13.200 0"/><path d="M6.700 11.500a5.200 5.200 0 0 1 7.600 0"/></g><circle cx="10.500" cy="13.700" r="2" fill="#fff"/></svg>
<svg width="21" height="18" viewBox="0 0 21 18" style="margin-left:9px"><path d="M1 6.300h3L8.500 2v14L4 11.700H1z" fill="none" stroke="#fff" stroke-width="1.500" stroke-linejoin="round"/><path d="M11 6q2 3 0 6" fill="none" stroke="#fff" stroke-width="1.400"/><g fill="none" stroke="#665a57" stroke-width="1.400"><path d="M13.500 3.500q4 5.500 0 11"/><path d="M16.300 1.500q5.500 7.500 0 15"/></g></svg>
<svg width="21" height="18" viewBox="0 0 21 18" style="margin-left:9px"><path d="M7.500 5H15q2.200 0 2.200 2.200v7q0 2.200-2.200 2.200H4q-2.200 0-2.200-2.200V11" fill="none" stroke="#fff" stroke-width="1.500"/><path d="M8 7h6.500q1 0 1 1v5.500q0 1-1 1h-10q-.9 0-1-1L7 9.500zM18 8.500h1q1.300 0 1.300 1v3q0 1-1.300 1h-1z" fill="#fff"/><path d="M3 0h4L5.500 3.500H8L2 11l1-5H.5z" fill="#fff"/></svg>
<div class="clock"><fit-text w="62.500">03:12 PM</fit-text><fit-text w="78">02-08-2025</fit-text></div>
</div>`);

define('desktop-screen', `<style>:host{display:flex;flex-direction:column;width:1920px;height:1080px;overflow:hidden}</style>
<tab-strip></tab-strip><tool-bar></tool-bar><hr-chatbot></hr-chatbot><task-bar></task-bar>`);
</script>
</body>
</html>
